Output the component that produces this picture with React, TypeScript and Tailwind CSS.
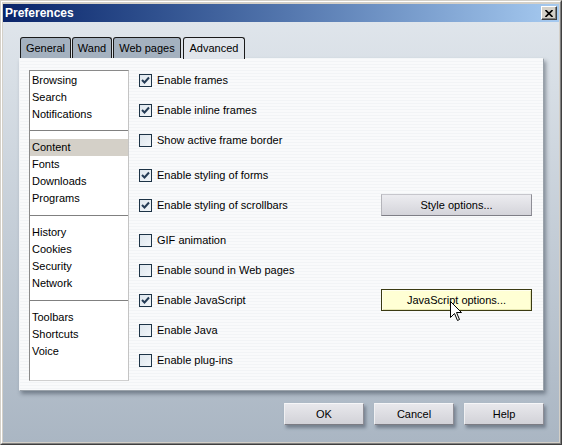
import { useState } from 'react'

type Option = {
  label: string
  checked: boolean
  button?: string
  hot?: boolean
}

const sections: string[][] = [
  ['Browsing', 'Search', 'Notifications'],
  ['Content', 'Fonts', 'Downloads', 'Programs'],
  ['History', 'Cookies', 'Security', 'Network'],
  ['Toolbars', 'Shortcuts', 'Voice'],
]

const optionGroups: Option[][] = [
  [
    { label: 'Enable frames', checked: true },
    { label: 'Enable inline frames', checked: true },
    { label: 'Show active frame border', checked: false },
  ],
  [
    { label: 'Enable styling of forms', checked: true },
    { label: 'Enable styling of scrollbars', checked: true, button: 'Style options...' },
  ],
  [
    { label: 'GIF animation', checked: false },
    { label: 'Enable sound in Web pages', checked: false },
    { label: 'Enable JavaScript', checked: true, button: 'JavaScript options...', hot: true },
    { label: 'Enable Java', checked: false },
    { label: 'Enable plug-ins', checked: false },
  ],
]

const tabs = [
  { name: 'General', w: 'w-[51px]' },
  { name: 'Wand', w: 'w-[40px]' },
  { name: 'Web pages', w: 'w-[68px]' },
  { name: 'Advanced', w: 'w-[62px]' },
]

const CheckBox = ({ checked }: { checked: boolean }) => (
  <span className="flex h-[13px] w-[13px] shrink-0 items-center justify-center border border-[#1d3346] bg-gradient-to-br from-[#dfe7ee] to-[#f1f5f8]">
    {checked && (
      <svg width="9" height="8" viewBox="0 0 9 8">
        <path d="M1 4 L3.5 6.5 L8 1.5" fill="none" stroke="#243b55" strokeWidth="2" />
      </svg>
    )}
  </span>
)

const Cursor = () => (
  <svg className="absolute left-[68px] top-[11px]" width="13" height="21" viewBox="0 0 13 21">
    <path
      d="M0.5 0.5 L0.5 16.5 L4.5 12.5 L7.5 19.5 L9.5 18.5 L6.5 11.5 L11.5 11.5 Z"
      fill="#ffffff"
      stroke="#000000"
      strokeWidth="1"
    />
  </svg>
)

export default function App() {
  const [active, setActive] = useState('Content')

  return (
    <div className="h-[445px] w-[562px] border border-t-[#d4d0c8] border-l-[#d4d0c8] border-r-[#404040] border-b-[#404040] bg-[#d4d0c8] font-['Liberation_Sans',Arial,sans-serif] text-[11px] text-black">
      <div className="flex h-full flex-col border border-t-white border-l-white border-r-[#808080] border-b-[#808080] px-[1px] pt-[2px] pb-[1px]">
        {/* Title bar */}
        <div className="flex h-[18px] shrink-0 items-center justify-between bg-gradient-to-r from-[#0a246a] to-[#a6caf0] pl-[2px] pr-[2px]">
          <span className="text-[12px] font-bold text-white">Preferences</span>
          <button className="flex h-[14px] w-[16px] items-center justify-center border border-t-white border-l-white border-r-[#404040] border-b-[#404040] bg-[#d4d0c8] shadow-[inset_-1px_-1px_0_#808080]">
            <svg width="8" height="7" viewBox="0 0 8 7">
              <path d="M0.5 0 L7.5 7 M7.5 0 L0.5 7" stroke="#000" strokeWidth="1.6" />
            </svg>
          </button>
        </div>

        {/* Body */}
        <div className="flex flex-1 flex-col bg-gradient-to-b from-[#dfe5eb] to-[#aab6c3] px-[16px] pt-[15px]">
          {/* Tabs */}
          <div className="relative z-10 flex h-[21px] gap-[1px] pl-[1px]">
            {tabs.map((t) =>
              t.name === 'Advanced' ? (
                <div
                  key={t.name}
                  className={`${t.w} -mb-[1px] ml-[1px] flex h-[22px] items-center justify-center rounded-t-[3px] border border-b-0 border-[#1a1a1a] bg-[#e0e5eb] pb-[1px]`}
                >
                  {t.name}
                </div>
              ) : (
                <div
                  key={t.name}
                  className={`${t.w} flex h-[21px] items-center justify-center rounded-t-[3px] border border-b-0 border-[#1a1a1a] bg-[#a4b1bf]`}
                >
                  {t.name}
                </div>
              ),
            )}
          </div>

          {/* Panel */}
          <div className="flex h-[333px] w-[525px] items-start border border-t-[#f4f6f8] border-l-[#f4f6f8] border-r-[#9aa2aa] border-b-[#9aa2aa] bg-[repeating-linear-gradient(to_bottom,#f9fafb_0px,#f9fafb_2px,#f2f4f6_2px,#f2f4f6_3px)] pl-[9px] pr-[11px] pt-[6px] shadow-[2px_3px_4px_rgba(40,50,65,0.45)]">
            {/* Section list */}
            <div className="mt-[5px] h-[311px] w-[100px] shrink-0 border border-t-[#8a8a8a] border-l-[#8a8a8a] border-r-[#c4c4c4] border-b-[#d0d0d0] bg-white pt-[1px]">
              {sections.map((group, gi) => (
                <div key={gi}>
                  {gi > 0 && (
                    <div className={`${gi === 1 ? 'mt-[7px]' : 'mt-[8px]'} mb-[8px] h-px bg-[#808080]`} />
                  )}
                  {group.map((item) => (
                    <div
                      key={item}
                      onClick={() => setActive(item)}
                      className={`h-[17px] pl-[2px] leading-[17px] ${active === item ? 'bg-[#d4d0c8]' : ''}`}
                    >
                      {item}
                    </div>
                  ))}
                </div>
              ))}
            </div>

            {/* Options */}
            <div className="ml-[10px] flex flex-1 flex-col gap-[5px]">
              {optionGroups.map((group, gi) => (
                <div key={gi} className="flex flex-col">
                  {group.map((opt) => (
                    <div key={opt.label} className="flex h-[30px] items-center">
                      <CheckBox checked={opt.checked} />
                      <span className="ml-[5px] flex-1">{opt.label}</span>
                      {opt.button &&
                        (opt.hot ? (
                          <div className="relative flex h-[22px] w-[151px] items-center justify-center border border-[#3a3a12] bg-[#ffffd4] shadow-[inset_1px_1px_0_#ffffee,inset_-1px_-1px_0_#e6e6b0]">
                            {opt.button}
                            <Cursor />
                          </div>
                        ) : (
                          <div className="flex h-[22px] w-[151px] items-center justify-center border border-t-[#c6c6cc] border-l-[#b4b4ba] border-r-[#8e8e96] border-b-[#7e7e86] bg-gradient-to-b from-[#ececf0] to-[#d4d4da]">
                            {opt.button}
                          </div>
                        ))}
                    </div>
                  ))}
                </div>
              ))}
            </div>
          </div>

          {/* Dialog buttons */}
          <div className="mt-[12px] flex w-[525px] justify-end gap-[10px]">
            {['OK', 'Cancel', 'Help'].map((b) => (
              <button
                key={b}
                className="flex h-[22px] w-[80px] items-center justify-center border border-t-[#f6f6f8] border-l-[#f0f0f2] border-r-[#8c8c94] border-b-[#7c7c84] bg-gradient-to-b from-[#e8e8ec] to-[#d2d2d8] text-[11px] shadow-[2px_3px_3px_rgba(40,50,65,0.4)]"
              >
                {b}
              </button>
            ))}
          </div>
        </div>
      </div>
    </div>
  )
}
